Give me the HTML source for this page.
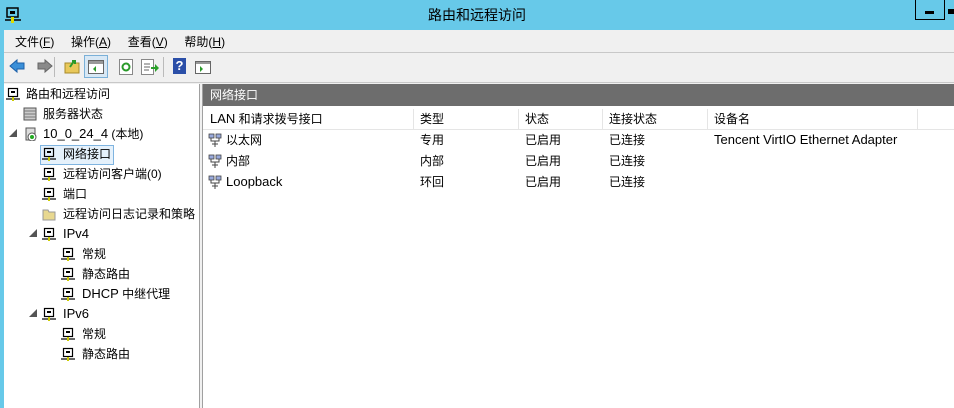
<!DOCTYPE html>
<html><head><meta charset="utf-8"><style>
*{margin:0;padding:0;box-sizing:border-box}
body{width:954px;height:408px;overflow:hidden;background:#67c9e9;font-family:"Liberation Sans","Noto Sans CJK SC",sans-serif;font-size:12px;color:#000;position:relative}
.a{position:absolute}
.ni{position:absolute;width:14px;height:14px}
.t{position:absolute;white-space:nowrap;line-height:16px}
.l{font-size:13px}
</style></head><body>
<svg class="a" style="left:4px;top:6px" width="18" height="18" viewBox="0 0 18 18"><rect x="3" y="2" width="11" height="9" fill="none" stroke="#000" stroke-width="1.5"/><rect x="6" y="5" width="5" height="3" fill="#000"/><line x1="1" y1="14" x2="17" y2="14" stroke="#000" stroke-width="1.5"/><rect x="7" y="11" width="3" height="6" fill="#dd0"/></svg>
<div class="t" style="left:0;width:954px;text-align:center;top:7px;font-size:14px">路由和远程访问</div>
<div class="a" style="left:915px;top:0;width:30px;height:20px;border:1px solid #000;border-top:none"></div>
<div class="a" style="left:944px;top:0;width:10px;height:20px;border-left:1px solid #000"></div>
<div class="a" style="left:925px;top:11px;width:9px;height:3px;background:#000"></div>
<div class="a" style="left:948px;top:9px;width:6px;height:5px;background:#000"></div>
<div class="a" style="left:4px;top:30px;width:950px;height:378px;background:#f0f0f0"></div>
<div class="a" style="left:4px;top:52px;width:950px;height:1px;background:#c8c8c8"></div>
<div class="a" style="left:4px;top:82px;width:950px;height:1px;background:#c8c8c8"></div>
<div class="t" style="left:15px;top:34px">文件(<u>F</u>)&nbsp;&nbsp;&nbsp;&nbsp;&nbsp;操作(<u>A</u>)&nbsp;&nbsp;&nbsp;&nbsp;&nbsp;查看(<u>V</u>)&nbsp;&nbsp;&nbsp;&nbsp;&nbsp;帮助(<u>H</u>)</div>
<svg class="a" style="left:8px;top:57px" width="46" height="18"><path d="M2 9 L9 3 V6 H16 V12 H9 V15 Z" fill="#3a8fd8" stroke="#1c5fa8"/><path d="M44 9 L37 3 V6 H30 V12 H37 V15 Z" fill="#8a8a8a" stroke="#666"/></svg>
<div class="a" style="left:54px;top:57px;width:1px;height:20px;background:#bbb"></div>
<svg class="a" style="left:64px;top:58px" width="16" height="16"><rect x="1" y="5" width="14" height="10" fill="#e9c85a" stroke="#a88a2a"/><path d="M6 9 L10 3 M8 3 H11 V6" stroke="#2a9a2a" stroke-width="2" fill="none"/></svg>
<div class="a" style="left:84px;top:55px;width:24px;height:23px;border:1px solid #7ab0d8;background:#d8e8f5"></div>
<svg class="a" style="left:88px;top:60px" width="16" height="14"><rect x="0.5" y="0.5" width="15" height="13" fill="#fff" stroke="#666"/><rect x="1" y="1" width="14" height="3" fill="#999"/><path d="M8 6 L5 9 L8 12Z" fill="#2a9a2a"/></svg>
<svg class="a" style="left:119px;top:59px" width="14" height="16"><rect x="0.5" y="0.5" width="13" height="15" fill="#fff" stroke="#888"/><circle cx="7" cy="8" r="3.5" fill="none" stroke="#2a9a2a" stroke-width="2"/></svg>
<svg class="a" style="left:141px;top:59px" width="18" height="16"><rect x="0.5" y="0.5" width="12" height="15" fill="#fff" stroke="#888"/><path d="M3 5H9M3 8H9M3 11H8" stroke="#666"/><path d="M10 8 H14 V5 L18 9 L14 13 V10 H10Z" fill="#2aa02a"/></svg>
<div class="a" style="left:163px;top:57px;width:1px;height:20px;background:#bbb"></div>
<div class="a" style="left:173px;top:58px;width:13px;height:16px;background:#2b4fa8;color:#fff;font-weight:bold;font-size:13px;text-align:center;line-height:16px">?</div>
<svg class="a" style="left:195px;top:61px" width="16" height="13"><rect x="0.5" y="0.5" width="15" height="12" fill="#fff" stroke="#666"/><rect x="1" y="1" width="14" height="2" fill="#999"/><path d="M5 5 L8 8 L5 11Z" fill="#2a9a2a"/></svg>
<div class="a" style="left:4px;top:84px;width:196px;height:324px;background:#fff;border-right:1px solid #a0a0a0"></div>
<div class="a" style="left:202px;top:84px;width:752px;height:324px;background:#fff;border-left:1px solid #a0a0a0"></div>
<div class="a" style="left:203px;top:84px;width:751px;height:22px;background:#6d6d6d"></div>
<div class="t" style="left:210px;top:87px;color:#fff">网络接口</div>
<div class="a" style="left:203px;top:108px;width:751px;height:22px;border-bottom:1px solid #e5e5e5"></div>
<div class="a" style="left:413px;top:109px;width:1px;height:20px;background:#e5e5e5"></div>
<div class="a" style="left:518px;top:109px;width:1px;height:20px;background:#e5e5e5"></div>
<div class="a" style="left:602px;top:109px;width:1px;height:20px;background:#e5e5e5"></div>
<div class="a" style="left:707px;top:109px;width:1px;height:20px;background:#e5e5e5"></div>
<div class="a" style="left:917px;top:109px;width:1px;height:20px;background:#e5e5e5"></div>
<div class="t" style="left:210px;top:111px"><span class="l">LAN</span> 和请求拨号接口</div>
<div class="t" style="left:420px;top:111px">类型</div>
<div class="t" style="left:525px;top:111px">状态</div>
<div class="t" style="left:609px;top:111px">连接状态</div>
<div class="t" style="left:714px;top:111px">设备名</div>
<div class="t" style="left:226px;top:132px">以太网</div><div class="t" style="left:420px;top:132px">专用</div><div class="t" style="left:525px;top:132px">已启用</div><div class="t" style="left:609px;top:132px">已连接</div><div class="t l" style="left:714px;top:132px">Tencent VirtIO Ethernet Adapter</div>
<div class="t" style="left:226px;top:153px">内部</div><div class="t" style="left:420px;top:153px">内部</div><div class="t" style="left:525px;top:153px">已启用</div><div class="t" style="left:609px;top:153px">已连接</div>
<div class="t l" style="left:226px;top:174px">Loopback</div><div class="t" style="left:420px;top:174px">环回</div><div class="t" style="left:525px;top:174px">已启用</div><div class="t" style="left:609px;top:174px">已连接</div>
<svg width="0" height="0" style="position:absolute"><defs>
<g id="nic"><rect x="1" y="1" width="5" height="4" fill="#9ad" stroke="#444" stroke-width=".8"/><rect x="8" y="1" width="5" height="4" fill="#9ad" stroke="#444" stroke-width=".8"/><path d="M3 5V8H11V5M7 8V14M4 11H10" stroke="#444" fill="none"/></g>
<g id="srv"><rect x="2.5" y="1.5" width="9" height="8" fill="none" stroke="#000" stroke-width="1.2"/><rect x="5" y="4" width="4" height="2" fill="#000"/><line x1="0" y1="12" x2="14" y2="12" stroke="#000" stroke-width="1.2"/><rect x="6" y="10" width="2" height="4" fill="#cc0"/></g>
</defs></svg>
<svg class="ni" style="left:208px;top:133px"><use href="#nic"/></svg>
<svg class="ni" style="left:208px;top:154px"><use href="#nic"/></svg>
<svg class="ni" style="left:208px;top:175px"><use href="#nic"/></svg>
<div class="a" style="left:40px;top:145px;width:74px;height:20px;background:#e5f1fb;border:1px solid #7fb4e0"></div>
<svg class="ni" style="left:6px;top:87px"><use href="#srv"/></svg><div class="t" style="left:26px;top:86px">路由和远程访问</div>
<svg class="ni" style="left:23px;top:107px"><rect x="1" y="1" width="12" height="12" fill="#ccc" stroke="#555"/><path d="M1 4H13M1 7H13M1 10H13" stroke="#777"/></svg><div class="t" style="left:43px;top:106px">服务器状态</div>
<div class="t" style="left:9px;top:126px;font-size:8px;color:#555">◢</div>
<svg class="ni" style="left:24px;top:127px"><rect x="2" y="1" width="9" height="12" fill="#ddd" stroke="#555"/><circle cx="8" cy="10" r="4" fill="#fff" stroke="#555"/><circle cx="8" cy="10" r="2" fill="#2a2"/></svg><div class="t" style="left:43px;top:126px"><span class="l">10_0_24_4</span> (本地)</div>
<svg class="ni" style="left:42px;top:147px"><use href="#srv"/></svg><div class="t" style="left:63px;top:146px">网络接口</div>
<svg class="ni" style="left:42px;top:167px"><use href="#srv"/></svg><div class="t" style="left:63px;top:166px">远程访问客户端(0)</div>
<svg class="ni" style="left:42px;top:187px"><use href="#srv"/></svg><div class="t" style="left:63px;top:186px">端口</div>
<svg class="ni" style="left:42px;top:207px"><path d="M1 3H6L7 5H13V13H1Z" fill="#e8d890" stroke="#999"/></svg><div class="t" style="left:63px;top:206px">远程访问日志记录和策略</div>
<div class="t" style="left:29px;top:226px;font-size:8px;color:#555">◢</div>
<svg class="ni" style="left:42px;top:227px"><use href="#srv"/></svg><div class="t l" style="left:63px;top:226px">IPv4</div>
<svg class="ni" style="left:61px;top:247px"><use href="#srv"/></svg><div class="t" style="left:82px;top:246px">常规</div>
<svg class="ni" style="left:61px;top:267px"><use href="#srv"/></svg><div class="t" style="left:82px;top:266px">静态路由</div>
<svg class="ni" style="left:61px;top:287px"><use href="#srv"/></svg><div class="t" style="left:82px;top:286px"><span class="l">DHCP</span> 中继代理</div>
<div class="t" style="left:29px;top:306px;font-size:8px;color:#555">◢</div>
<svg class="ni" style="left:42px;top:307px"><use href="#srv"/></svg><div class="t l" style="left:63px;top:306px">IPv6</div>
<svg class="ni" style="left:61px;top:327px"><use href="#srv"/></svg><div class="t" style="left:82px;top:326px">常规</div>
<svg class="ni" style="left:61px;top:347px"><use href="#srv"/></svg><div class="t" style="left:82px;top:346px">静态路由</div>
</body></html>
